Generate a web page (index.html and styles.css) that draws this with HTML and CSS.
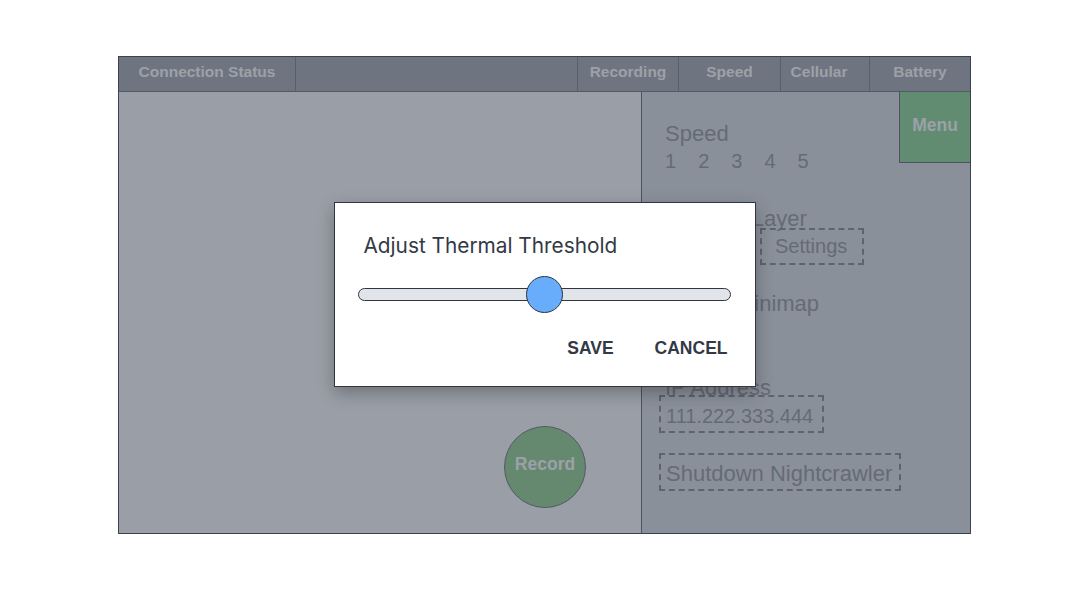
FILE: index.html
```html
<!DOCTYPE html>
<html lang="en">
<head>
  <meta charset="UTF-8">
  <meta name="viewport" content="width=device-width, initial-scale=1.0">
  <title>Nightcrawler Control</title>
  <link rel="stylesheet" href="styles.css">
</head>
<body>
  <div class="frame">
    <!-- top status bar -->
    <header class="status-bar">
      <div class="cell cell-conn">Connection Status</div>
      <div class="cell cell-spacer"></div>
      <div class="cell cell-rec">Recording</div>
      <div class="cell cell-speed">Speed</div>
      <div class="cell cell-cellular">Cellular</div>
      <div class="cell cell-batt">Battery</div>
    </header>

    <div class="main">
      <!-- camera view -->
      <div class="view">
        <button class="record-btn">Record</button>
      </div>

      <!-- side controls -->
      <aside class="side">
        <div class="menu-btn">Menu</div>

        <div class="label">Speed</div>
        <div class="speed-steps">
          <span>1</span><span>2</span><span>3</span><span>4</span><span>5</span>
        </div>

        <div class="label label-layer">Thermal Layer</div>
        <div class="btn-row">
          <span class="dash-btn">Show</span>
          <span class="dash-btn">Settings</span>
        </div>

        <div class="label label-minimap">Toggle Minimap</div>

        <div class="label label-ip">IP Address</div>
        <div class="dash-box ip-box">111.222.333.444</div>
        <div class="dash-box shutdown-box">Shutdown Nightcrawler</div>
      </aside>
    </div>

    <!-- threshold dialog -->
    <div class="overlay">
      <div class="modal">
        <div class="modal-title">Adjust Thermal Threshold</div>
        <div class="slider">
          <div class="slider-track"></div>
          <div class="slider-thumb"></div>
        </div>
        <div class="modal-actions">
          <button class="text-btn">SAVE</button>
          <button class="text-btn">CANCEL</button>
        </div>
      </div>
    </div>
  </div>
</body>
</html>
```

FILE: styles.css
```css
body {
  margin: 0;
  background: #ffffff;
  font-family: "Liberation Sans", Arial, sans-serif;
}
.frame {
  position: relative;
  box-sizing: border-box;
  width: 853px;
  height: 478px;
  margin: 56px 0 0 118px;
  border: 1px solid #3c424d;
  display: flex;
  flex-direction: column;
}

/* status bar */
.status-bar {
  display: flex;
  height: 35px;
  box-sizing: border-box;
  background: #6f7580;
  border-bottom: 1px solid #555b66;
}
.cell {
  box-sizing: border-box;
  height: 34px;
  line-height: 30px;
  padding-bottom: 4px;
  text-align: center;
  font-size: 15.5px;
  font-weight: bold;
  color: #9ca1a9;
  white-space: nowrap;
}
.cell-conn {
  width: 177px;
  border-right: 1px solid #5a606b;
}
.cell-spacer {
  flex: 1;
}
.cell-rec,
.cell-speed,
.cell-cellular,
.cell-batt {
  border-left: 1px solid #5a606b;
}
.cell-rec { width: 101px; }
.cell-speed { width: 102px; }
.cell-cellular { width: 89px; padding-right: 12px; }
.cell-batt { width: 101px; }

/* main area */
.main {
  flex: 1;
  display: flex;
}
.view {
  flex: 1;
  background: #9a9ea6;
  display: flex;
  align-items: flex-end;
  justify-content: flex-end;
  padding: 0 55px 25px 0;
}
.record-btn {
  box-sizing: border-box;
  width: 82px;
  height: 82px;
  border-radius: 50%;
  border: 1px solid #545a65;
  background: #65896f;
  color: #9ca1a9;
  font-family: "Liberation Sans", Arial, sans-serif;
  font-size: 17.5px;
  font-weight: bold;
  padding: 0 0 5px;
}
.side {
  position: relative;
  box-sizing: border-box;
  width: 329px;
  background: #8a909a;
  border-left: 1px solid #4d535e;
  padding: 29px 0 0 17px;
  color: #656b75;
}
.menu-btn {
  position: absolute;
  top: 0;
  right: 0;
  box-sizing: border-box;
  width: 71px;
  height: 71px;
  background: #628c72;
  border-left: 1px solid #4d535e;
  border-bottom: 1px solid #4d535e;
  padding-top: 23px;
  text-align: center;
  line-height: 20px;
  font-size: 17.5px;
  font-weight: bold;
  color: #9ca1a9;
}
.label {
  font-size: 22px;
  line-height: 25px;
  padding-left: 6px;
}
.speed-steps {
  display: flex;
  gap: 22px;
  margin-top: 4px;
  padding-left: 6px;
  font-size: 20px;
  line-height: 23px;
}
.label-layer { margin-top: 33px; }
.btn-row {
  display: flex;
  gap: 13px;
  margin-top: -3px;
  padding-left: 6px;
}
.dash-btn {
  border: 2px dashed #5e646e;
  padding: 5px 15px 5px 13px;
  font-size: 20px;
  line-height: 23px;
}
.label-minimap { margin-top: 26px; }
.label-ip { margin-top: 59px; }
.dash-box {
  display: table;
  border: 2px dashed #5e646e;
}
.ip-box {
  margin-top: -5px;
  padding: 8px 9px 3px 5px;
  font-size: 20px;
  line-height: 23px;
}
.shutdown-box {
  margin-top: 20px;
  padding: 6px 7px 3px 5px;
  font-size: 22px;
  line-height: 25px;
}

/* dialog */
.overlay {
  position: absolute;
  inset: 0;
  display: flex;
  align-items: center;
  justify-content: center;
}
.modal {
  box-sizing: border-box;
  width: 422px;
  height: 185px;
  margin-bottom: 1px;
  background: #ffffff;
  border: 1px solid #2f3542;
  box-shadow: 0 6px 16px rgba(0, 0, 0, 0.28);
  padding: 30px 24px 0 23px;
  display: flex;
  flex-direction: column;
}
.modal-title {
  padding-left: 6px;
  font-family: Inter, "Liberation Sans", sans-serif;
  font-size: 20.8px;
  line-height: 25px;
  color: #333945;
}
.slider {
  position: relative;
  height: 37px;
  margin-top: 18px;
}
.slider-track {
  box-sizing: border-box;
  height: 13px;
  margin-top: 12px;
  background: #e1e4e9;
  border: 1px solid #2f3542;
  border-radius: 7px;
}
.slider-thumb {
  position: absolute;
  top: 0;
  left: 168px;
  box-sizing: border-box;
  width: 37px;
  height: 37px;
  border-radius: 50%;
  background: #68acfc;
  border: 1px solid #2f3542;
}
.modal-actions {
  display: flex;
  justify-content: flex-end;
  gap: 41px;
  margin-top: 25px;
  padding-right: 3px;
}
.text-btn {
  background: none;
  border: none;
  padding: 0;
  font-family: "Liberation Sans", Arial, sans-serif;
  font-size: 17.5px;
  line-height: 20px;
  font-weight: bold;
  color: #333945;
}
```
